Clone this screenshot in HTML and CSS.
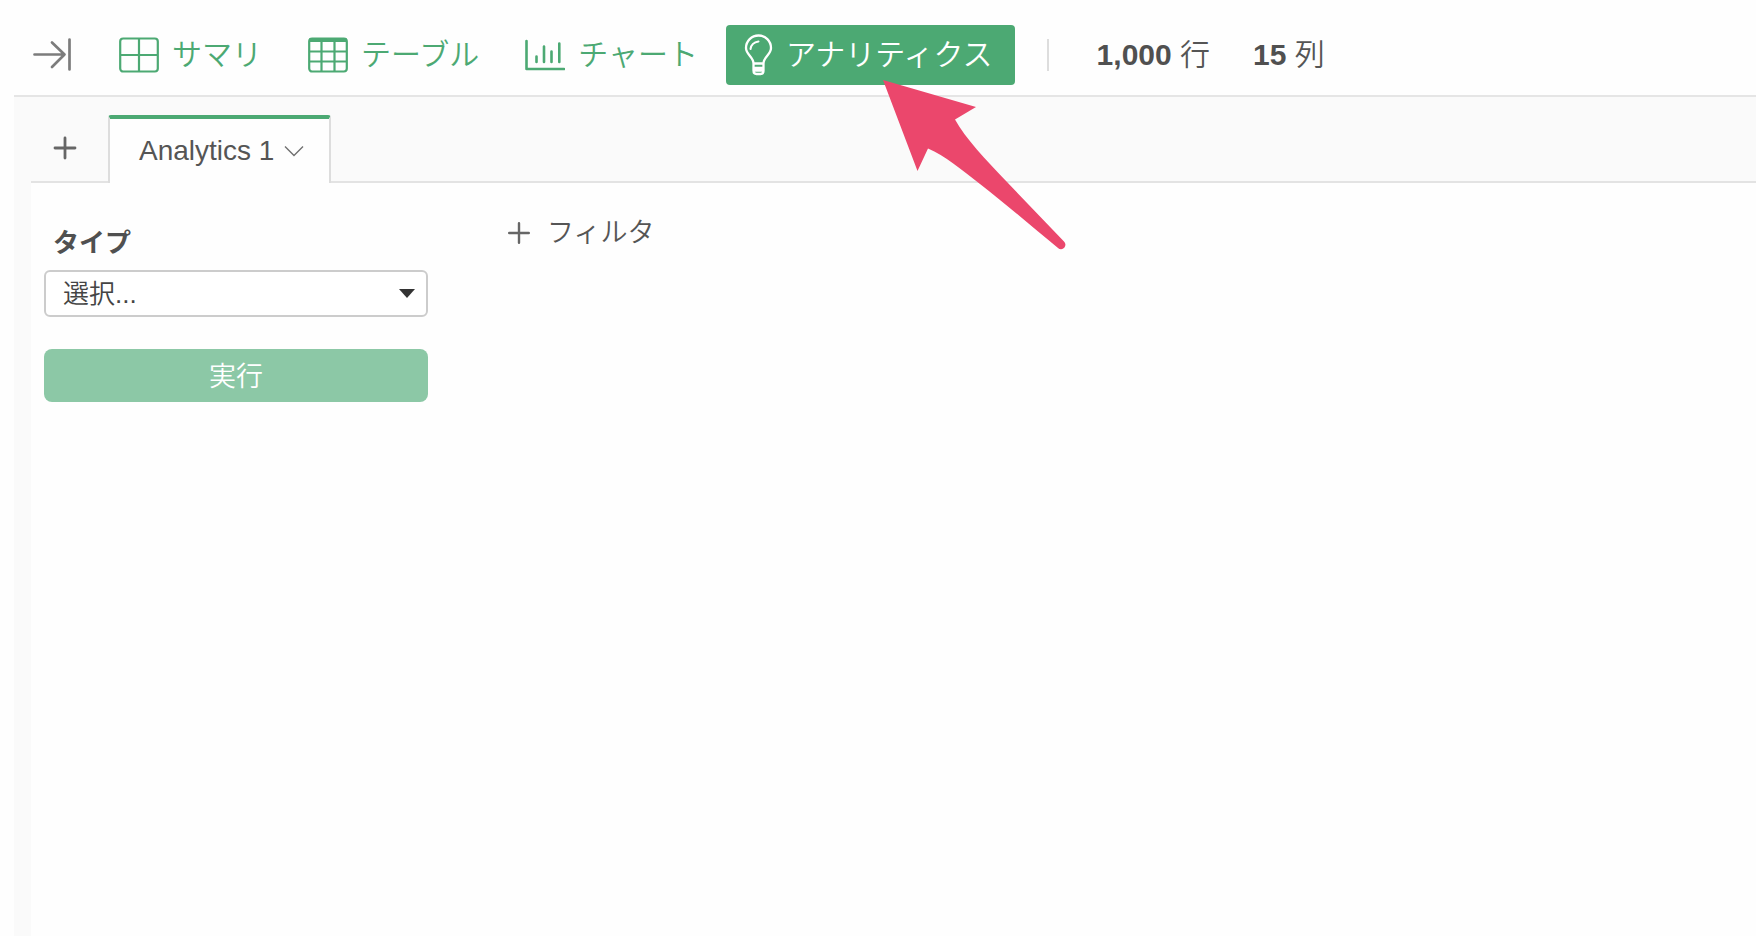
FILE: index.html
```html
<!DOCTYPE html>
<html lang="ja">
<head>
<meta charset="utf-8">
<title>アナリティクス</title>
<link rel="stylesheet" href="styles.css">
</head>
<body>
<div class="app">
  <header class="toolbar">
    <button class="collapse" type="button" aria-label="パネルを開く">
      <svg width="38" height="34" viewBox="0 0 38 34" fill="none" stroke="#7c7c7c" stroke-width="2.7" stroke-linecap="round" stroke-linejoin="round"><path d="M1.500 16.500H31.500M19 4.500 31.500 16.500 19 29M36.500 1.500V31.500"/></svg>
    </button>
    <nav class="views">
      <button class="view" type="button">
        <svg width="40" height="36" viewBox="0 0 40 36" fill="none" stroke="currentColor" stroke-width="2.2"><rect x="1.200" y="1.500" width="37.600" height="33" rx="3"/><path d="M20 1.500V34.500M1 18H39"/></svg>
        <span>サマリ</span>
      </button>
      <button class="view" type="button">
        <svg width="40" height="36" viewBox="0 0 40 36" fill="none" stroke="currentColor" stroke-width="2.2"><rect x="1.200" y="1.500" width="37.600" height="33" rx="3"/><path d="M1.500 3H38.500" stroke-width="4"/><path d="M13.500 2V34M26.500 2V34M1 14.500H39M1 24.500H39"/></svg>
        <span>テーブル</span>
      </button>
      <button class="view" type="button">
        <svg width="40" height="36" viewBox="0 0 40 36" fill="none" stroke="currentColor" stroke-width="2.6" stroke-linecap="round" stroke-linejoin="round"><path d="M1.500 4V32H39M11.500 19.500V25M19 9.500V25M26.500 14.500V25M34.300 6.500V25"/></svg>
        <span>チャート</span>
      </button>
      <button class="view active" type="button" aria-pressed="true">
        <svg width="29" height="42" viewBox="0 0 29 42" fill="none" stroke="currentColor" stroke-width="2.3" stroke-linecap="round" stroke-linejoin="round"><path d="M9.500 29.500C9.500 23 2 20.500 2 14A12.500 12.500 0 0 1 27 14C27 20.500 19.500 23 19.500 29.500ZM9.500 29.500V36.500Q9.500 40 12.500 40H16.500Q19.500 40 19.500 36.500V29.500M9.500 34H19.500M9.500 36.500H19.500"/><path d="M6.500 15Q7.500 8.500 14.500 7.500" stroke-width="2"/></svg>
        <span>アナリティクス</span>
      </button>
    </nav>
    <div class="stats">
      <span><b>1,000</b> 行</span>
      <span><b>15</b> 列</span>
    </div>
  </header>
  <main class="workspace">
    <div class="tabs">
      <button class="add" type="button" aria-label="追加">
        <svg width="24" height="24" viewBox="0 0 24 24" stroke="#666" stroke-width="2.800" stroke-linecap="round"><path d="M2 12H22M12 2V22"/></svg>
      </button>
      <button class="tab" type="button">
        <span>Analytics 1</span>
        <svg width="20" height="12" viewBox="0 0 20 12" fill="none" stroke="#707070" stroke-width="1.400"><path d="M1 1.500 10 10.500 19 1.500"/></svg>
      </button>
      <div class="rest"></div>
    </div>
    <div class="panel">
      <form class="settings">
        <label for="type">タイプ</label>
        <div class="picker">
          <select id="type"><option>選択...</option></select>
          <svg class="caret" width="16" height="9" viewBox="0 0 16 9"><path d="M0 0H16L8 9Z" fill="#333"/></svg>
        </div>
        <button class="run" type="button">実行</button>
      </form>
      <div class="result">
        <button class="filter" type="button">
          <svg width="22" height="22" viewBox="0 0 22 22" stroke="#666" stroke-width="2.400" stroke-linecap="round"><path d="M1.200 11H20.800M11 1.200V20.800"/></svg>
          <span>フィルタ</span>
        </button>
      </div>
    </div>
  </main>
  <svg class="pointer" width="184" height="170" viewBox="0 0 184 170" aria-hidden="true"><path d="M0 0 93 27 72 39.500C82 58 103 80 124 102L181 161.500A4 4 0 0 1 175 168C152 149 124 125 97 104C78 89 62 76 45 68.500L34.500 91Z" fill="#eb476c"/></svg>
</div>
</body>
</html>
```
FILE: styles.css
```css
* { box-sizing: border-box; }

body {
  margin: 0;
  background: #fefefe;
  color: #555;
  font-family: "Liberation Sans", "Noto Sans CJK JP", sans-serif;
  font-weight: 350;
}

button {
  display: flex;
  align-items: center;
  margin: 0;
  padding: 0;
  border: 0;
  background: none;
  color: inherit;
  font: inherit;
}

svg { flex: none; }

.app {
  position: relative;
  display: flex;
  flex-direction: column;
  min-height: 100vh;
  padding-left: 14px;
}

.toolbar {
  display: flex;
  align-items: center;
  padding: 25px 0 10px 19px;
  border-bottom: 2px solid #e5e5e5;
}

.views {
  display: flex;
  gap: 10px;
  margin-left: 30px;
}

.view {
  gap: 13px;
  height: 60px;
  padding: 0 18px;
  border-radius: 4px;
  color: #4ca973;
  font-size: 30px;
  line-height: 40px;
  white-space: nowrap;
}

.view.active {
  padding-right: 22px;
  background: #4ca973;
  color: #fff;
}

.stats {
  display: flex;
  align-items: center;
  gap: 43px;
  height: 32px;
  margin-left: 32px;
  padding-left: 48px;
  border-left: 2px solid #ddd;
  font-size: 30px;
  line-height: 32px;
  white-space: nowrap;
}

.stats b {
  color: #505050;
  font-weight: 700;
}

.workspace {
  display: flex;
  flex: 1;
  flex-direction: column;
  padding: 18px 0 0 17px;
  background: #fafafa;
}

.tabs {
  display: flex;
  height: 68px;
}

.add {
  justify-content: center;
  width: 77px;
  padding-right: 9px;
  border-bottom: 2px solid #e3e3e3;
}

.tab {
  gap: 10px;
  padding: 0 25px 0 29px;
  border: 2px solid #ddd;
  border-top: 4px solid #4ca973;
  border-bottom: 0;
  border-radius: 3px 3px 0 0;
  background: #fefefe;
  font-size: 28px;
  white-space: nowrap;
}

.rest {
  flex: 1;
  border-bottom: 2px solid #e3e3e3;
}

.panel {
  display: flex;
  flex: 1;
  gap: 80px;
  padding: 32px 13px;
  background: #fefefe;
}

.settings {
  display: flex;
  flex-direction: column;
  width: 384px;
}

.settings label {
  margin: 8px 0 7px 9px;
  color: #505050;
  font-size: 26px;
  font-weight: 700;
  line-height: 40px;
}

.picker {
  position: relative;
}

.picker select {
  width: 100%;
  height: 47px;
  padding: 0 40px 0 17px;
  border: 2px solid #ccc;
  border-radius: 6px;
  appearance: none;
  background: #fff;
  color: #444;
  font: inherit;
  font-size: 26px;
}

.caret {
  position: absolute;
  top: 19px;
  right: 13px;
  pointer-events: none;
}

.run {
  justify-content: center;
  height: 53px;
  margin-top: 32px;
  padding-bottom: 2px;
  border-radius: 8px;
  background: #8cc8a6;
  color: #fff;
  font-size: 27px;
}

.filter {
  gap: 17px;
  height: 36px;
  font-size: 27px;
  line-height: 36px;
}

.pointer {
  position: absolute;
  top: 80px;
  left: 883px;
  pointer-events: none;
}
```
